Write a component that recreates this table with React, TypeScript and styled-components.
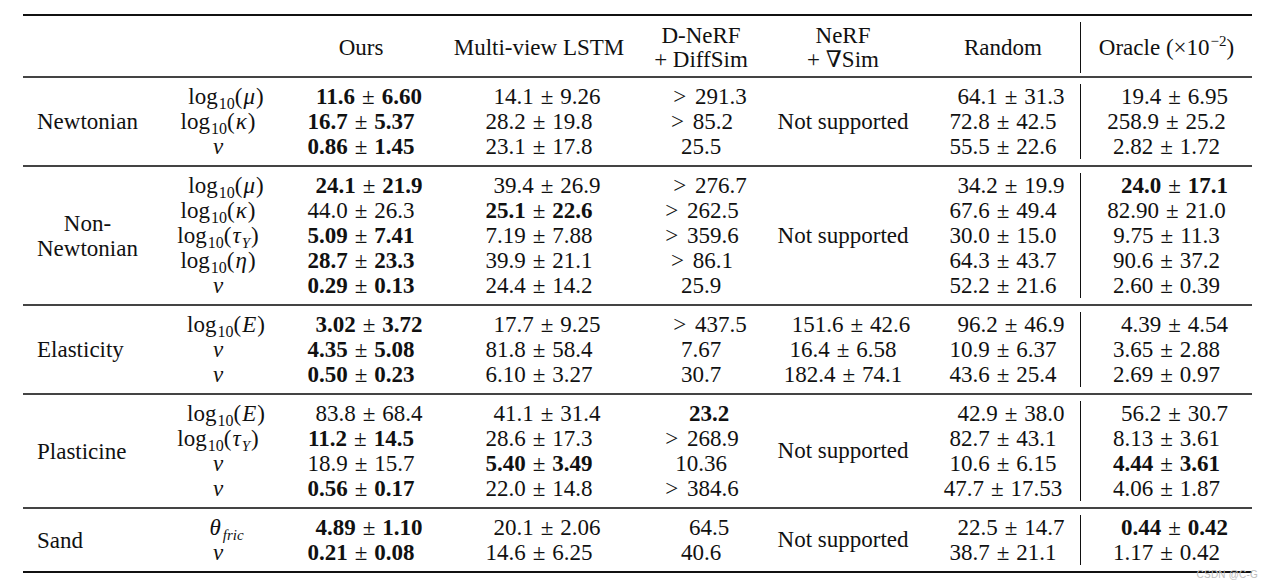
import React from 'react'
import styled, { createGlobalStyle } from 'styled-components'

const GlobalStyle = createGlobalStyle`
  html, body {
    margin: 0;
    padding: 0;
    background: #fff;
  }
  body {
    font-family: 'Liberation Serif', 'DejaVu Serif', serif;
    color: #111;
  }
`

const COLUMNS = '127px 136px 150px 206px 118px 166px 154px 172px'

const Page = styled.div`
  position: relative;
  width: 1273px;
  height: 588px;
  padding: 14px 0 0 23px;
  box-sizing: border-box;
`

const Table = styled.div`
  width: 1229px;
  border-top: 2px solid #111;
  border-bottom: 2px solid #111;
  font-size: 23px;
`

const Head = styled.div`
  display: grid;
  grid-template-columns: ${COLUMNS};
  grid-template-rows: 51px;
  padding: 6px 0 3px;
  border-bottom: 2px solid #444;
`

const HeadCell = styled.div<{ $rule?: boolean }>`
  display: flex;
  align-items: center;
  justify-content: center;
  text-align: center;
  line-height: 24px;
  white-space: nowrap;
  border-left: ${({ $rule }) => ($rule ? '1px solid #111' : 'none')};
`

const Group = styled.div<{ $last?: boolean }>`
  display: grid;
  grid-template-columns: ${COLUMNS};
  grid-auto-rows: 25px;
  padding: 6px 0;
  border-bottom: ${({ $last }) => ($last ? 'none' : '2px solid #444')};
`

const Label = styled.div<{ $rows: number }>`
  grid-column: 1;
  grid-row: 1 / span ${({ $rows }) => $rows};
  align-self: center;
  justify-self: start;
  padding-left: 14px;
  text-align: center;
  line-height: 25px;
`

const Spanned = styled.div<{ $rows: number }>`
  grid-column: 6;
  grid-row: 1 / span ${({ $rows }) => $rows};
  display: flex;
  align-items: center;
  justify-content: center;
  white-space: nowrap;
`

const Cell = styled.div<{ $lead?: boolean; $rule?: boolean }>`
  display: flex;
  align-items: center;
  justify-content: center;
  white-space: nowrap;
  line-height: 25px;
  padding-left: ${({ $lead }) => ($lead ? '16px' : '0')};
  border-left: ${({ $rule }) => ($rule ? '1px solid #111' : 'none')};
`

const Num = styled.span<{ $bold?: boolean }>`
  font-weight: ${({ $bold }) => ($bold ? 700 : 400)};
`

const PlusMinus = styled.span`
  margin: 0 7px;
  font-weight: 400;
`

const Greater = styled.span`
  margin: 0 9px 0 2px;
`

const Italic = styled.i`
  font-style: italic;
  margin: 0 1px;
`

const Sub = styled.sub`
  font-size: 16px;
  vertical-align: -5px;
  line-height: 0;
  margin-left: 1px;
`

const SubItalic = styled(Sub)`
  font-style: italic;
  font-size: 15px;
`

const Sup = styled.sup`
  font-size: 15px;
  vertical-align: 9px;
  line-height: 0;
  margin-left: 1px;
`

const Watermark = styled.div`
  position: absolute;
  right: 15px;
  top: 569px;
  font-family: 'Liberation Sans', Arial, sans-serif;
  font-size: 10px;
  color: #bdbdbd;
  letter-spacing: 0.2px;
`

type Param = 'mu' | 'kappa' | 'tau' | 'eta' | 'E' | 'nu' | 'v' | 'theta'

type Row = {
  param: Param
  cells: string[]
  nerf?: string
}

type GroupData = {
  label: React.ReactNode
  rows: Row[]
  nerfSpan?: boolean
}

const logOf = (sym: React.ReactNode) => (
  <span>
    log<Sub>10</Sub>(<Italic>{sym}</Italic>)
  </span>
)

const ParamText = ({ p }: { p: Param }) => {
  switch (p) {
    case 'mu':
      return logOf('μ')
    case 'kappa':
      return logOf('κ')
    case 'eta':
      return logOf('η')
    case 'E':
      return logOf('E')
    case 'tau':
      return logOf(
        <>
          τ<SubItalic>Y</SubItalic>
        </>
      )
    case 'nu':
      return <Italic>ν</Italic>
    case 'v':
      return <Italic>v</Italic>
    case 'theta':
      return (
        <span>
          <Italic>θ</Italic>
          <SubItalic>fric</SubItalic>
        </span>
      )
  }
}

// "*" prefix marks a bold (best) entry
const Value = ({ text }: { text: string }) => {
  const bold = text.startsWith('*')
  const raw = bold ? text.slice(1) : text
  if (raw.includes(' ± ')) {
    const [a, b] = raw.split(' ± ')
    return (
      <Num $bold={bold}>
        {a}
        <PlusMinus>±</PlusMinus>
        {b}
      </Num>
    )
  }
  if (raw.startsWith('> ')) {
    return (
      <Num $bold={bold}>
        <Greater>&gt;</Greater>
        {raw.slice(2)}
      </Num>
    )
  }
  return <Num $bold={bold}>{raw}</Num>
}

const groups: GroupData[] = [
  {
    label: 'Newtonian',
    nerfSpan: true,
    rows: [
      { param: 'mu', cells: ['*11.6 ± 6.60', '14.1 ± 9.26', '> 291.3', '64.1 ± 31.3', '19.4 ± 6.95'] },
      { param: 'kappa', cells: ['*16.7 ± 5.37', '28.2 ± 19.8', '> 85.2', '72.8 ± 42.5', '258.9 ± 25.2'] },
      { param: 'v', cells: ['*0.86 ± 1.45', '23.1 ± 17.8', '25.5', '55.5 ± 22.6', '2.82 ± 1.72'] },
    ],
  },
  {
    label: (
      <>
        Non-
        <br />
        Newtonian
      </>
    ),
    nerfSpan: true,
    rows: [
      { param: 'mu', cells: ['*24.1 ± 21.9', '39.4 ± 26.9', '> 276.7', '34.2 ± 19.9', '*24.0 ± 17.1'] },
      { param: 'kappa', cells: ['44.0 ± 26.3', '*25.1 ± 22.6', '> 262.5', '67.6 ± 49.4', '82.90 ± 21.0'] },
      { param: 'tau', cells: ['*5.09 ± 7.41', '7.19 ± 7.88', '> 359.6', '30.0 ± 15.0', '9.75 ± 11.3'] },
      { param: 'eta', cells: ['*28.7 ± 23.3', '39.9 ± 21.1', '> 86.1', '64.3 ± 43.7', '90.6 ± 37.2'] },
      { param: 'v', cells: ['*0.29 ± 0.13', '24.4 ± 14.2', '25.9', '52.2 ± 21.6', '2.60 ± 0.39'] },
    ],
  },
  {
    label: 'Elasticity',
    rows: [
      { param: 'E', nerf: '151.6 ± 42.6', cells: ['*3.02 ± 3.72', '17.7 ± 9.25', '> 437.5', '96.2 ± 46.9', '4.39 ± 4.54'] },
      { param: 'nu', nerf: '16.4 ± 6.58', cells: ['*4.35 ± 5.08', '81.8 ± 58.4', '7.67', '10.9 ± 6.37', '3.65 ± 2.88'] },
      { param: 'v', nerf: '182.4 ± 74.1', cells: ['*0.50 ± 0.23', '6.10 ± 3.27', '30.7', '43.6 ± 25.4', '2.69 ± 0.97'] },
    ],
  },
  {
    label: 'Plasticine',
    nerfSpan: true,
    rows: [
      { param: 'E', cells: ['83.8 ± 68.4', '41.1 ± 31.4', '*23.2', '42.9 ± 38.0', '56.2 ± 30.7'] },
      { param: 'tau', cells: ['*11.2 ± 14.5', '28.6 ± 17.3', '> 268.9', '82.7 ± 43.1', '8.13 ± 3.61'] },
      { param: 'nu', cells: ['18.9 ± 15.7', '*5.40 ± 3.49', '10.36', '10.6 ± 6.15', '*4.44 ± 3.61'] },
      { param: 'v', cells: ['*0.56 ± 0.17', '22.0 ± 14.8', '> 384.6', '47.7 ± 17.53', '4.06 ± 1.87'] },
    ],
  },
  {
    label: 'Sand',
    nerfSpan: true,
    rows: [
      { param: 'theta', cells: ['*4.89 ± 1.10', '20.1 ± 2.06', '64.5', '22.5 ± 14.7', '*0.44 ± 0.42'] },
      { param: 'v', cells: ['*0.21 ± 0.08', '14.6 ± 6.25', '40.6', '38.7 ± 21.1', '1.17 ± 0.42'] },
    ],
  },
]

const GroupRows = ({ group, last }: { group: GroupData; last: boolean }) => {
  const n = group.rows.length
  return (
    <Group $last={last}>
      <Label $rows={n}>{group.label}</Label>
      {group.nerfSpan && <Spanned $rows={n}>Not supported</Spanned>}
      {group.rows.map((row, i) => {
        const lead = i === 0
        const [ours, lstm, dnerf, random, oracle] = row.cells
        return (
          <React.Fragment key={i}>
            <Cell $lead={lead}>
              <ParamText p={row.param} />
            </Cell>
            <Cell $lead={lead}>
              <Value text={ours} />
            </Cell>
            <Cell $lead={lead}>
              <Value text={lstm} />
            </Cell>
            <Cell $lead={lead}>
              <Value text={dnerf} />
            </Cell>
            {!group.nerfSpan && (
              <Cell $lead={lead}>
                <Value text={row.nerf ?? ''} />
              </Cell>
            )}
            <Cell $lead={lead}>
              <Value text={random} />
            </Cell>
            <Cell $lead={lead} $rule>
              <Value text={oracle} />
            </Cell>
          </React.Fragment>
        )
      })}
    </Group>
  )
}

export default function App() {
  return (
    <Page>
      <GlobalStyle />
      <Table>
        <Head>
          <HeadCell />
          <HeadCell />
          <HeadCell>
            <span>Ours</span>
          </HeadCell>
          <HeadCell>
            <span>Multi-view LSTM</span>
          </HeadCell>
          <HeadCell>
            <span>
              D-NeRF
              <br />+ DiffSim
            </span>
          </HeadCell>
          <HeadCell>
            <span>
              NeRF
              <br />+ ∇Sim
            </span>
          </HeadCell>
          <HeadCell>
            <span>Random</span>
          </HeadCell>
          <HeadCell $rule>
            <span>
              Oracle (×10<Sup>−2</Sup>)
            </span>
          </HeadCell>
        </Head>
        {groups.map((g, i) => (
          <GroupRows key={i} group={g} last={i === groups.length - 1} />
        ))}
      </Table>
      <Watermark>CSDN @C-G</Watermark>
    </Page>
  )
}
